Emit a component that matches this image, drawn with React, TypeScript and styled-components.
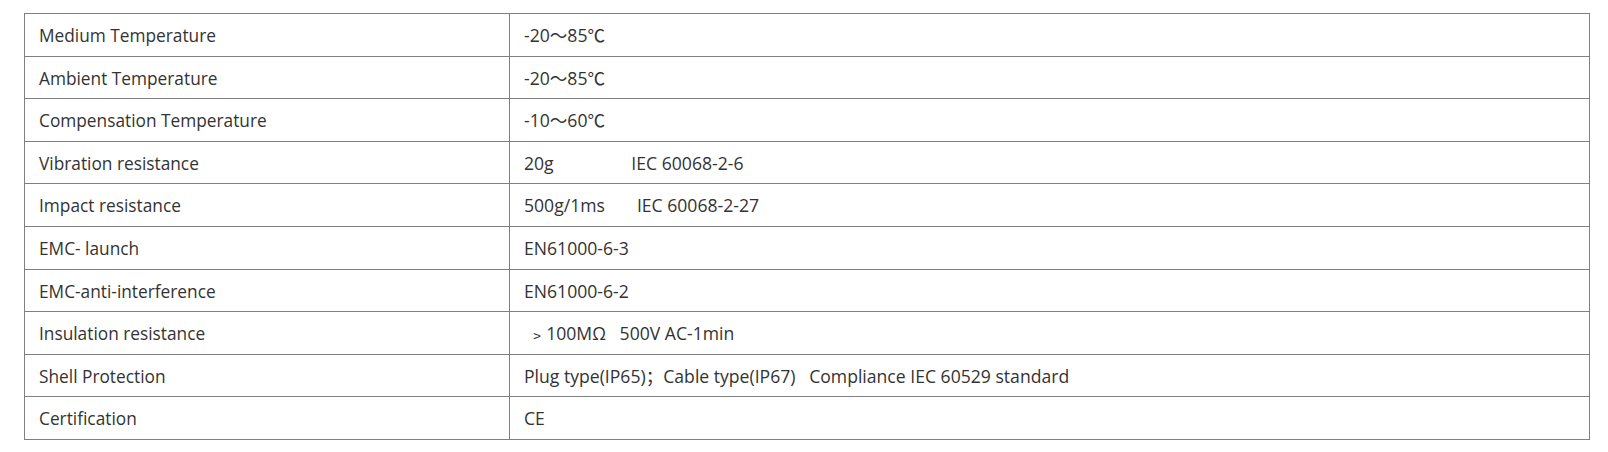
import React from 'react';
import styled, { createGlobalStyle } from 'styled-components';

const GlobalStyle = createGlobalStyle`
   html, body {
      margin: 0;
      padding: 0;
      background: #fff;
   }
   body {
      font-family: 'Open Sans', 'Noto Sans CJK SC', sans-serif;
   }
`;

type SpecRow = {
   name: string;
   value: string;
};

const specs: SpecRow[] = [
   { name: 'Medium Temperature', value: '-20～85℃' },
   { name: 'Ambient Temperature', value: '-20～85℃' },
   { name: 'Compensation Temperature', value: '-10～60℃' },
   { name: 'Vibration resistance', value: '20g\u00a0\u00a0\u00a0\u00a0\u00a0\u00a0\u00a0\u00a0\u00a0\u00a0\u00a0\u00a0\u00a0\u00a0\u00a0\u00a0\u00a0IEC 60068-2-6' },
   { name: 'Impact resistance', value: '500g/1ms\u00a0\u00a0\u00a0\u00a0\u00a0\u00a0\u00a0IEC 60068-2-27' },
   { name: 'EMC- launch', value: 'EN61000-6-3' },
   { name: 'EMC-anti-interference', value: 'EN61000-6-2' },
   { name: 'Insulation resistance', value: '\u00a0﹥100MΩ\u00a0\u00a0\u00a0500V AC-1min' },
   { name: 'Shell Protection', value: 'Plug type(IP65)；Cable type(IP67)\u00a0\u00a0\u00a0Compliance IEC 60529 standard' },
   { name: 'Certification', value: 'CE' },
];

export default function App() {
   return (
      <>
         <GlobalStyle />
         <Wrapper>
            <SpecTable>
               <colgroup>
                  <NameCol />
                  <col />
               </colgroup>
               <tbody>
                  {specs.map((s) => (
                     <tr key={s.name}>
                        <Cell>{s.name}</Cell>
                        <Cell $value>{s.value}</Cell>
                     </tr>
                  ))}
               </tbody>
            </SpecTable>
         </Wrapper>
      </>
   );
}

const Wrapper = styled.div`
   padding: 13px 0 0 24px;
`;

const SpecTable = styled.table`
   width: 1566px;
   border-collapse: collapse;
   table-layout: fixed;
   border: 1px solid #808080;
`;

const NameCol = styled.col`
   width: 485px;
`;

const Cell = styled.td<{ $value?: boolean }>`
   border: 1px solid #808080;
   padding: 9px 14px 7px;
   height: 25.6px;
   line-height: 25.6px;
   font-size: ${(p) => (p.$value ? '17.6px' : '17.3px')};
   color: #333;
   white-space: pre;
   vertical-align: middle;
`;
